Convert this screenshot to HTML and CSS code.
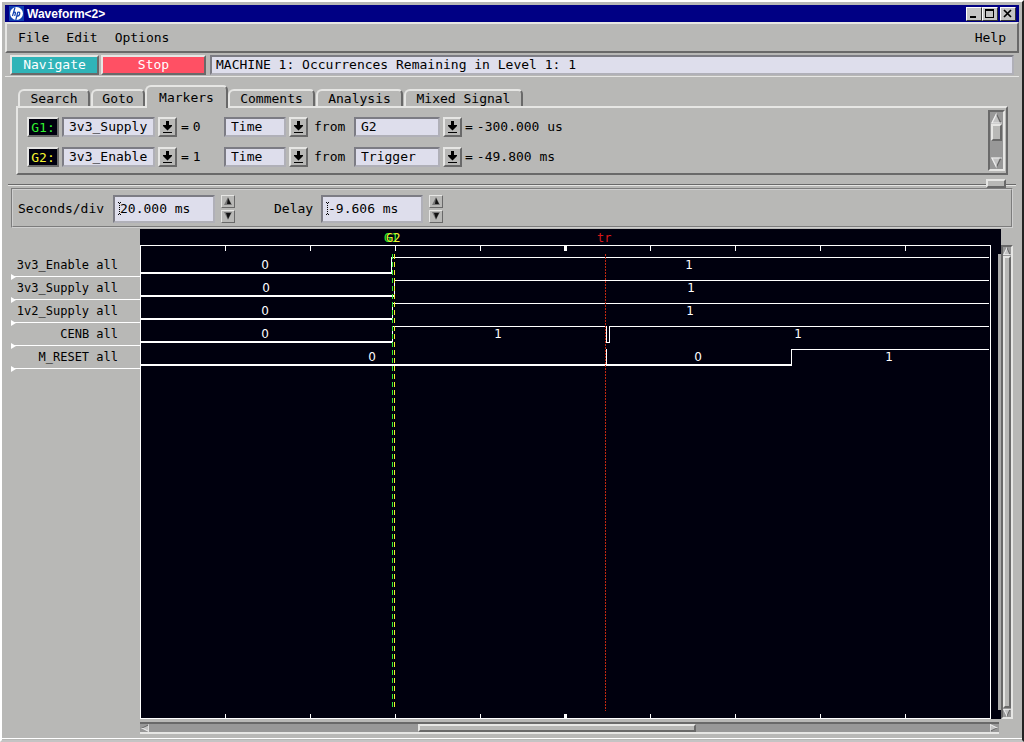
FILE: index.html
```html
<!DOCTYPE html>
<html lang="en">
<head>
    <meta charset="UTF-8">
    <meta name="viewport" content="width=device-width, initial-scale=1.0">
    <title>Waveform&lt;2&gt;</title>
    <link rel="stylesheet" href="styles.css">
</head>
<body>
    <svg class="defs" width="0" height="0" aria-hidden="true">
        <symbol id="drop" viewBox="0 0 11 12">
            <path d="M4 0h3v4h3v1L5.500 9.500 1 5V4h3zM1 11h9v1H1z"/>
        </symbol>
        <symbol id="tri-up" viewBox="0 0 8 8">
            <path d="M4 0l4 8H0z" fill="#777"/>
            <path d="M4 1l3 6H3z" fill="#111"/>
        </symbol>
        <symbol id="tri-down" viewBox="0 0 8 8">
            <path d="M0 0h8L4 8z" fill="#777"/>
            <path d="M2 1h5L4 7z" fill="#111"/>
        </symbol>
        <symbol id="arrow" viewBox="0 0 12 12">
            <path d="M6 0l6 12H0z" fill="#c4c4c4"/>
            <path d="M6 0l6 12h-2L6 3z" fill="#666"/>
            <path d="M6 0L0 12h12v-1H2L6 3z" fill="#eee"/>
        </symbol>
        <symbol id="arrow-down" viewBox="0 0 12 12">
            <path d="M6 12L0 0h12z" fill="#c4c4c4"/>
            <path d="M6 12L12 0h-2L6 9z" fill="#666"/>
            <path d="M6 12L0 0h12v1H2l4 8z" fill="#eee"/>
        </symbol>
    </svg>

    <div class="window">
        <header class="titlebar">
            <svg class="logo" viewBox="0 0 15 15" width="15" height="15">
                <rect width="15" height="15" fill="#1040b0"/>
                <circle cx="7.500" cy="7.500" r="6.500" fill="#fff"/>
                <path d="M6 1.500L3.500 10M4.500 7q2-2 2 0l-.8 3M8.800 6l-2 8M8.300 6.500q3-1 2.400 1.500t-3 2" fill="none" stroke="#1040b0" stroke-width="1.200"/>
            </svg>
            <h1 class="title">Waveform&lt;2&gt;</h1>
            <div class="window-buttons">
                <button class="window-button" aria-label="Minimize"><svg viewBox="0 0 10 9"><path d="M1 7h6v2H1z"/></svg></button>
                <button class="window-button" aria-label="Maximize"><svg viewBox="0 0 10 9"><path d="M0 0h9v9H0zM1 2v6h7V2z" fill-rule="evenodd"/></svg></button>
                <button class="window-button window-close" aria-label="Close"><svg viewBox="0 0 10 9"><path d="M1 1l7 7M8 1L1 8" stroke="#000" stroke-width="1.700"/></svg></button>
            </div>
        </header>

        <nav class="menubar">
            <a href="#" class="menu">File</a>
            <a href="#" class="menu">Edit</a>
            <a href="#" class="menu">Options</a>
            <a href="#" class="menu menu-help">Help</a>
        </nav>

        <div class="toolbar">
            <button class="action navigate">Navigate</button>
            <button class="action stop">Stop</button>
            <output class="status">MACHINE 1: Occurrences Remaining in Level 1: 1</output>
        </div>

        <div class="tabs" role="tablist">
            <button class="tab tab-search" role="tab">Search</button>
            <button class="tab tab-goto" role="tab">Goto</button>
            <button class="tab tab-markers active" role="tab" aria-selected="true">Markers</button>
            <button class="tab tab-comments" role="tab">Comments</button>
            <button class="tab tab-analysis" role="tab">Analysis</button>
            <button class="tab tab-mixed" role="tab">Mixed Signal</button>
        </div>

        <section class="panel" role="tabpanel">
            <div class="markers">
                <div class="marker">
                    <button class="marker-name green">G1:</button>
                    <div class="combo signal">
                        <select aria-label="G1 signal"><option>3v3_Supply</option></select>
                        <button class="drop" aria-label="G1 signal list"><svg><use href="#drop"/></svg></button>
                    </div>
                    <div class="level"><span>=</span><span>0</span></div>
                    <div class="combo mode">
                        <select aria-label="G1 mode"><option>Time</option></select>
                        <button class="drop" aria-label="G1 mode list"><svg><use href="#drop"/></svg></button>
                    </div>
                    <label class="from" for="g1-from">from</label>
                    <div class="combo origin">
                        <select id="g1-from"><option>G2</option></select>
                        <button class="drop" aria-label="G1 origin list"><svg><use href="#drop"/></svg></button>
                    </div>
                    <div class="offset"><span>=</span><span>-300.000 us</span></div>
                </div>
                <div class="marker">
                    <button class="marker-name yellow">G2:</button>
                    <div class="combo signal">
                        <select aria-label="G2 signal"><option>3v3_Enable</option></select>
                        <button class="drop" aria-label="G2 signal list"><svg><use href="#drop"/></svg></button>
                    </div>
                    <div class="level"><span>=</span><span>1</span></div>
                    <div class="combo mode">
                        <select aria-label="G2 mode"><option>Time</option></select>
                        <button class="drop" aria-label="G2 mode list"><svg><use href="#drop"/></svg></button>
                    </div>
                    <label class="from" for="g2-from">from</label>
                    <div class="combo origin">
                        <select id="g2-from"><option>Trigger</option></select>
                        <button class="drop" aria-label="G2 origin list"><svg><use href="#drop"/></svg></button>
                    </div>
                    <div class="offset"><span>=</span><span>-49.800 ms</span></div>
                </div>
            </div>
            <div class="panel-scroll">
                <button class="scroll-arrow" aria-label="Scroll up"><svg><use href="#arrow"/></svg></button>
                <div class="panel-thumb"></div>
                <button class="scroll-arrow down" aria-label="Scroll down"><svg><use href="#arrow-down"/></svg></button>
            </div>
        </section>

        <div class="sash"><div class="sash-handle"></div></div>

        <section class="scale">
            <label class="scale-label" for="seconds">Seconds/div</label>
            <div class="entry">
                <input id="seconds" type="text" value="20.000 ms">
                <svg class="caret" viewBox="0 0 3 13"><path d="M0 .5h1M2 .5h1M0 12.500h1M2 12.500h1M1.500 1v11" stroke="#000" stroke-dasharray="1"/></svg>
            </div>
            <div class="spinner">
                <button aria-label="More seconds"><svg><use href="#tri-up"/></svg></button>
                <button aria-label="Fewer seconds"><svg><use href="#tri-down"/></svg></button>
            </div>
            <label class="scale-label delay" for="delay">Delay</label>
            <div class="entry">
                <input id="delay" type="text" value="-9.606 ms">
                <svg class="caret" viewBox="0 0 3 13"><path d="M0 .5h1M2 .5h1M0 12.500h1M2 12.500h1M1.500 1v11" stroke="#000" stroke-dasharray="1"/></svg>
            </div>
            <div class="spinner">
                <button aria-label="More delay"><svg><use href="#tri-up"/></svg></button>
                <button aria-label="Less delay"><svg><use href="#tri-down"/></svg></button>
            </div>
        </section>

        <main class="display">
            <ul class="signals">
                <li>3v3_Enable all</li>
                <li>3v3_Supply all</li>
                <li>1v2_Supply all</li>
                <li>CENB all</li>
                <li>M_RESET all</li>
            </ul>
            <div class="plot">
                <svg class="waves" viewBox="0 0 861 490" role="img" aria-label="Waveforms">
                    <rect class="screen" width="861" height="490"/>
                    <!-- frame and time divisions -->
                    <path class="line" d="M0 16h851v1H0zM0 489h851v1H0zM0 16h1v474H0zM850 16h1v474h-1z"/>
                    <path class="line" d="M85 17h1v5h-1zM170 17h1v5h-1zM255 17h1v5h-1zM340 17h1v5h-1zM424 17h3v5h-3zM510 17h1v5h-1zM595 17h1v5h-1zM680 17h1v5h-1zM765 17h1v5h-1z"/>
                    <path class="line" d="M85 485h1v5h-1zM170 485h1v5h-1zM255 485h1v5h-1zM340 485h1v5h-1zM424 485h3v5h-3zM510 485h1v5h-1zM595 485h1v5h-1zM680 485h1v5h-1zM765 485h1v5h-1z"/>
                    <!-- 3v3_Enable, 3v3_Supply, 1v2_Supply -->
                    <path class="line" d="M0 43h252v2H0zM251 28h1v16h-1zM251 28h598v1H251z"/>
                    <path class="line" d="M0 66h255v2H0zM254 51h1v16h-1zM254 51h595v1H254z"/>
                    <path class="line" d="M0 89h253v2H0zM252 74h1v16h-1zM252 74h597v1H252z"/>
                    <!-- CENB -->
                    <path class="line" d="M0 112h253v2H0zM252 97h1v16h-1zM252 97h215v1H252zM466 97h1v17h-1zM466 113h4v1h-4zM469 97h1v17h-1zM469 97h380v1H469z"/>
                    <!-- M_RESET -->
                    <path class="line" d="M0 135h652v2H0zM466 120h1v16h-1zM651 120h1v16h-1zM651 120h198v1H651z"/>
                    <!-- markers -->
                    <path class="cursor green" d="M252.500 25v453"/>
                    <path class="cursor yellow" d="M254.500 25v453"/>
                    <path class="trigger" d="M465.500 25v457"/>
                    <text class="flag green" x="244" y="13">G1</text>
                    <text class="flag yellow" x="246" y="13">G2</text>
                    <text class="flag red" x="457" y="13">tr</text>
                    <g class="values">
                        <text x="125" y="40">0</text>
                        <text x="549" y="40">1</text>
                        <text x="126" y="63">0</text>
                        <text x="551" y="63">1</text>
                        <text x="125" y="86">0</text>
                        <text x="550" y="86">1</text>
                        <text x="125" y="109">0</text>
                        <text x="358" y="109">1</text>
                        <text x="658" y="109">1</text>
                        <text x="232" y="132">0</text>
                        <text x="558" y="132">0</text>
                        <text x="749" y="132">1</text>
                    </g>
                    <path d="M858 25h3v456h-3z" fill="#aaa"/>
                </svg>
                <div class="h-scroll">
                    <button class="mini left" aria-label="Scroll left"><svg><use href="#arrow"/></svg></button>
                    <div class="h-track"><div class="h-thumb"></div></div>
                    <button class="mini right" aria-label="Scroll right"><svg><use href="#arrow"/></svg></button>
                </div>
            </div>
            <div class="v-scroll">
                <button class="mini" aria-label="Scroll signals up"><svg><use href="#arrow"/></svg></button>
                <div class="v-thumb"></div>
                <button class="mini down" aria-label="Scroll signals down"><svg><use href="#arrow-down"/></svg></button>
            </div>
        </main>
    </div>
</body>
</html>
```

FILE: styles.css
```css
:root {
    --gray: #b8b8b6;
    --light: #e6e6e4;
    --dark: #696969;
    --trough: #989898;
    --field: #dedeec;
    --field-shade: #7c7c84;
    --navy: #000084;
    --screen: #00000e;
    --green: #30f030;
    --yellow: #f4f430;
    --red: #d81818;
    --edge: 6px;
}

* {
    margin: 0;
    padding: 0;
    box-sizing: border-box;
}

body {
    background: var(--gray);
    color: #000;
    font: 13px/16px "DejaVu Sans Mono", "Liberation Mono", monospace;
}

button,
input,
select {
    font: inherit;
    color: inherit;
    border-radius: 0;
    appearance: none;
}

.defs {
    position: absolute;
}

.window {
    min-height: 100vh;
    padding: 3px 3px 0;
    border-style: solid;
    border-width: 2px;
    border-color: #fff #222 #c4c4c4 #fff;
    display: flex;
    flex-direction: column;
}

/* title bar */
.titlebar {
    height: 17px;
    padding: 0 3px 0 4px;
    display: flex;
    align-items: center;
    gap: 3px;
    background: var(--navy);
    color: #fff;
}

.title {
    font: bold 12px/16px "Liberation Sans", sans-serif;
}

.window-buttons {
    margin-left: auto;
    display: flex;
}

.window-button {
    width: 16px;
    height: 14px;
    display: flex;
    align-items: center;
    justify-content: center;
    background: #c4c4c4;
    border: 1px solid;
    border-color: #fff #333 #333 #fff;
}

.window-button svg {
    width: 10px;
    height: 9px;
}

.window-close {
    margin-left: 2px;
}

/* menu bar */
.menubar {
    height: 31px;
    padding: 1px 11px 0;
    display: flex;
    align-items: center;
    gap: 17px;
    border: 2px solid;
    border-color: var(--light) var(--dark) var(--dark) var(--light);
}

.menu {
    color: #000;
    text-decoration: none;
}

.menu-help {
    margin-left: auto;
}

/* toolbar */
.toolbar {
    height: 24px;
    padding: 2px 5px 1px;
    display: flex;
    border-bottom: 1px solid var(--light);
}

.action {
    height: 20px;
    border: 2px solid;
    border-color: var(--light) var(--dark) var(--dark) var(--light);
    color: #fff;
}

.navigate {
    width: 89px;
    margin-right: 2px;
    background: #30b4b8;
}

.stop {
    width: 105px;
    margin-right: 4px;
    background: #ff5064;
}

.status {
    flex: 1;
    height: 20px;
    padding-left: 4px;
    background: var(--field);
    border: 2px solid;
    border-color: var(--field-shade) #b0b0b8 #b0b0b8 var(--field-shade);
}

/* tabs */
.tabs {
    height: 29px;
    padding-left: 13px;
    display: flex;
    align-items: flex-end;
    gap: 1px;
}

.tab {
    height: 17px;
    background: var(--gray);
    border: 2px solid;
    border-color: var(--light) var(--dark) transparent var(--light);
    border-bottom: 0;
    border-radius: 6px 5px 0 0;
    line-height: 15px;
}

.tab.active {
    position: relative;
    height: 23px;
    margin: 0 -1px -2px;
}

.tab-search {
    width: 72px;
}

.tab-goto {
    width: 54px;
}

.tab-markers {
    width: 83px;
}

.tab-comments,
.tab-analysis {
    width: 87px;
}

.tab-mixed {
    width: 119px;
}

/* marker panel */
.panel {
    margin: 0 11px;
    padding: 2px 1px 2px 9px;
    display: flex;
    border: 2px solid;
    border-color: var(--light) var(--dark) var(--dark) var(--light);
}

.markers {
    flex: 1;
    padding: 7px 0 4px;
    display: flex;
    flex-direction: column;
    gap: 10px;
}

.marker {
    height: 20px;
    display: flex;
    align-items: center;
}

.marker-name {
    width: 32px;
    height: 20px;
    margin-right: 3px;
    background: var(--screen);
    border: 2px solid;
    border-color: var(--light) var(--dark) var(--dark) var(--light);
    line-height: 15px;
}

.marker-name.green {
    color: var(--green);
}

.marker-name.yellow {
    color: var(--yellow);
}

.combo {
    display: flex;
    gap: 3px;
}

.combo select {
    flex: 1;
    height: 20px;
    padding-left: 5px;
    background: var(--field);
    border: 2px solid;
    border-color: var(--field-shade) #b0b0b8 #b0b0b8 var(--field-shade);
}

.drop {
    width: 19px;
    height: 20px;
    display: flex;
    align-items: center;
    justify-content: center;
    background: var(--gray);
    border: 2px solid;
    border-color: var(--light) var(--dark) var(--dark) var(--light);
}

.drop svg {
    width: 11px;
    height: 12px;
}

.signal {
    width: 115px;
}

.mode {
    width: 84px;
}

.origin {
    width: 108px;
}

.level {
    width: 47px;
    padding-left: 4px;
    display: flex;
    gap: 4px;
}

.from {
    width: 46px;
    padding-left: 6px;
}

.offset {
    padding-left: 3px;
    display: flex;
    gap: 4px;
}

.panel-scroll {
    width: 17px;
    padding: 0 1px;
    display: flex;
    flex-direction: column;
    background: var(--trough);
    border: 2px solid;
    border-color: var(--dark) var(--light) var(--light) var(--dark);
}

.scroll-arrow {
    height: 12px;
    background: none;
    border: 0;
    line-height: 0;
}

.scroll-arrow svg {
    width: 11px;
    height: 12px;
}

.panel-thumb {
    height: 17px;
    background: var(--gray);
    border: 2px solid;
    border-color: var(--light) var(--dark) var(--dark) var(--light);
}

.down {
    margin-top: auto;
}

/* pane divider */
.sash {
    position: relative;
    height: 13px;
    margin: 0 3px;
}

.sash::before {
    content: "";
    display: block;
    height: 10px;
    border-bottom: 1px solid var(--light);
    box-shadow: inset 0 -1px var(--dark);
}

.sash-handle {
    position: absolute;
    top: 4px;
    right: 10px;
    width: 20px;
    height: 9px;
    background: var(--gray);
    border: 2px solid;
    border-color: var(--light) var(--dark) var(--dark) var(--light);
}

/* time scale */
.scale {
    height: 40px;
    margin: 0 var(--edge);
    padding: 1px 5px 0;
    display: flex;
    align-items: center;
    border: 2px groove #d0d0d0;
}

.scale-label {
    width: 95px;
}

.scale-label.delay {
    width: 47px;
    margin-left: 39px;
}

.entry {
    position: relative;
    width: 102px;
}

.entry input {
    width: 100%;
    height: 28px;
    padding-left: 5px;
    background: var(--field);
    border: 2px solid;
    border-color: var(--field-shade) #b0b0b8 #b0b0b8 var(--field-shade);
}

.caret {
    position: absolute;
    top: 7px;
    left: 5px;
    width: 3px;
    height: 13px;
}

.spinner {
    margin-left: 6px;
    display: flex;
    flex-direction: column;
    gap: 2px;
}

.spinner button {
    width: 14px;
    height: 13px;
    background: var(--gray);
    border: 1px solid;
    border-color: var(--light) var(--dark) var(--dark) var(--light);
    line-height: 0;
}

.spinner svg {
    width: 8px;
    height: 8px;
}

/* waveform display */
.display {
    margin: 1px var(--edge) 0;
    padding-bottom: 4px;
    display: flex;
}

.window::after {
    content: "";
    height: 1px;
    margin: 0 -3px;
    background: #fff;
}

.signals {
    width: 129px;
    padding-top: 25px;
    list-style: none;
    font-size: 12px;
    text-align: right;
    white-space: nowrap;
}

.signals li {
    position: relative;
    height: 23px;
    padding: 3px 22px 0 0;
    border-bottom: 1px solid #fff;
}

.signals li::before {
    content: "";
    position: absolute;
    left: 0;
    bottom: -4px;
    border: solid transparent;
    border-width: 3px 0 3px 5px;
    border-left-color: #fff;
}

.plot {
    flex: 1;
}

.waves {
    display: block;
    width: 100%;
}

.screen {
    fill: var(--screen);
}

.line {
    fill: #fff;
}

.cursor {
    stroke-dasharray: 5 3;
}

.cursor.green {
    stroke: var(--green);
}

.cursor.yellow {
    stroke: var(--yellow);
}

.trigger {
    stroke: #c02810;
    stroke-dasharray: 2 1;
}

.flag {
    font-size: 12px;
}

.flag.green {
    fill: var(--green);
}

.flag.yellow {
    fill: var(--yellow);
}

.flag.red {
    fill: var(--red);
}

.values {
    fill: #fff;
    font: 12px "DejaVu Sans", sans-serif;
    text-anchor: middle;
}

.h-scroll {
    height: 12px;
    margin: 3px 2px 0 0;
    padding: 0 1px;
    display: flex;
    background: var(--trough);
    border-top: 2px solid var(--dark);
    border-bottom: 2px solid var(--light);
}

.h-track {
    flex: 1;
}

.h-thumb {
    width: 33%;
    height: 8px;
    margin-left: 32%;
    background: var(--gray);
    border: 2px solid;
    border-color: var(--light) var(--dark) var(--dark) var(--light);
}

.mini {
    height: 8px;
    background: none;
    border: 0;
    line-height: 0;
}

.mini svg {
    width: 8px;
    height: 8px;
}

.left {
    transform: rotate(-90deg);
}

.right {
    transform: rotate(90deg);
}

.v-scroll {
    width: 12px;
    margin: 16px 0 15px;
    display: flex;
    flex-direction: column;
    background: var(--trough);
    border: 2px solid;
    border-color: var(--dark) var(--light) var(--light) var(--dark);
}

.v-thumb {
    flex: 1;
    margin: 1px 0;
    background: var(--gray);
    border: 2px solid;
    border-color: var(--light) var(--dark) var(--dark) var(--light);
}
```
